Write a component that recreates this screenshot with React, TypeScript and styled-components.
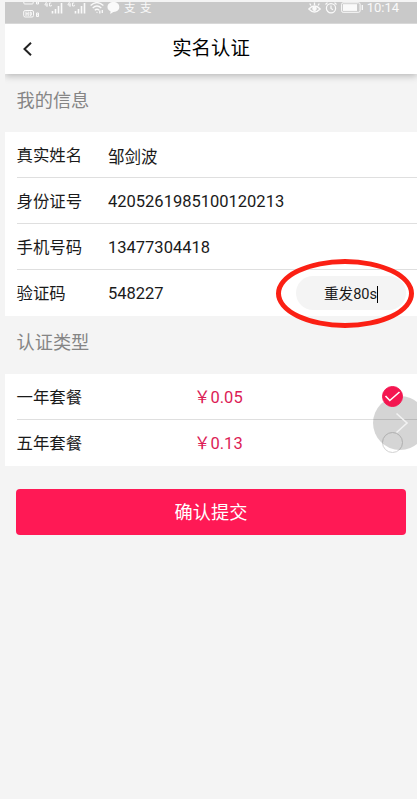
import React from "react";
import styled, { createGlobalStyle } from "styled-components";

const GlobalStyle = createGlobalStyle`
  * { box-sizing: border-box; }
  html, body { margin: 0; height: 100%; background: #f4f4f4; overflow: hidden; }
  body { font-family: Roboto, "Noto Sans CJK SC", sans-serif; color: #1a1a1a; }
`;

const Screen = styled.main`
  position: relative;
  width: 417px;
  height: 799px;
  padding: 2px 0 0 5px;
  overflow: hidden;
  background: #f4f4f4;
`;

const StatusBar = styled.div`
  display: flex;
  align-items: flex-start;
  justify-content: space-between;
  height: 22px;
  padding: 0 18px 0 18px;
  background: #c9c9c9;
  border-bottom: 1px solid #d8d8d8;
  color: #fafafa;
  svg { display: block; flex: none; }
`;

const StatusGroup = styled.div<{ $gap: number }>`
  display: flex;
  gap: ${(p) => p.$gap}px;
`;

const Clock = styled.span`
  font-size: 13px;
  line-height: 16px;
  margin: -2px 0 0 -1px;
`;

const PayGlyph = styled.span`
  font-size: 11.5px;
  line-height: 18px;
  width: 12px;
  margin: -3px 0 0 1px;
`;

const Header = styled.header`
  display: grid;
  grid-template-columns: 46px 1fr 46px;
  align-items: center;
  height: 50px;
  background: #fff;
  box-shadow: 0 2px 7px rgba(0, 0, 0, 0.25);
  clip-path: inset(0 0 -12px 0);
`;

const BackButton = styled.button`
  display: flex;
  justify-content: center;
  padding: 0;
  border: 0;
  background: none;
`;

const Title = styled.h1`
  margin: 0;
  font-size: 19.4px;
  line-height: 28px;
  font-weight: 400;
  text-align: center;
  color: #000;
`;

const SectionTitle = styled.h2`
  height: 58px;
  margin: 0;
  padding: 13px 0 0 11.5px;
  font-size: 18.2px;
  line-height: 27px;
  font-weight: 400;
  color: #858585;
`;

const List = styled.section`
  padding-left: 11.5px;
  background: #fff;
`;

const Row = styled.div<{ $columns: string }>`
  display: grid;
  grid-template-columns: ${(p) => p.$columns};
  align-items: center;
  height: 46px;
  border-bottom: 1px solid #dfdfdf;
  font-size: 16.4px;
  line-height: 24px;
  &:last-child { border-bottom-color: transparent; }
`;

const Label = styled.span`
  padding-top: 3px;
`;

const Value = styled.span<{ $drop?: number }>`
  font-size: 16.5px;
  padding-top: ${(p) => p.$drop ?? 3}px;
`;

const Price = styled.span`
  padding-top: 3px;
  font-size: 16.5px;
  color: #dc1c56;
`;

const ResendButton = styled.button`
  position: relative;
  display: flex;
  align-items: center;
  justify-content: center;
  width: 110px;
  height: 34px;
  padding: 3px 0 0;
  border: 0;
  border-radius: 17px;
  background: #f4f4f4;
  font: inherit;
  font-size: 14.6px;
  color: #1a1a1a;
`;

const Caret = styled.i`
  width: 1px;
  height: 17px;
  background: #000;
`;

const Highlight = styled.span`
  position: absolute;
  left: -20px;
  top: -17px;
  width: 138px;
  height: 69px;
  border: 5px solid #fb2014;
  border-radius: 50%;
  pointer-events: none;
`;

const Radio = styled.span<{ $checked: boolean }>`
  position: relative;
  z-index: ${(p) => (p.$checked ? 3 : 1)};
  display: flex;
  align-items: center;
  justify-content: center;
  width: 21px;
  height: 21px;
  border: 1px solid ${(p) => (p.$checked ? "#f41650" : "#d2d2d2")};
  border-radius: 50%;
  background: ${(p) => (p.$checked ? "#f41650" : "transparent")};
`;

const FloatingHandle = styled.button`
  position: absolute;
  z-index: 2;
  left: 373px;
  top: 396px;
  width: 54px;
  height: 54px;
  padding: 0 0 1px;
  border: 0;
  border-radius: 50%;
  background: rgba(0, 0, 0, 0.165);
  svg { display: block; margin-left: 22px; }
`;

const Submit = styled.button`
  display: block;
  width: 390px;
  height: 46px;
  margin: 23px 0 0 11px;
  padding: 0 0 3px;
  border: 0;
  border-radius: 4px;
  background: #ff1955;
  color: #fff;
  font: inherit;
  font-size: 18.2px;
`;

const HdBadge = () => (
  <svg width="18" height="18" viewBox="0 0 18 18" fill="none" stroke="currentColor">
    <path d="M.8 0v1q0 1 1 1h7.4q1 0 1-1V0M13.5 0h2v2h-2z" />
    <rect x=".7" y="8.5" width="9.8" height="6.5" rx="1.5" />
    <path d="M3 9.5v4.5M5.2 9.5v4.5M3 11.8h2.2M7.2 10v3.5h.8q1.2-1.7 0-3.5zM13.5 11h2v3.5h-2zM13.5 12.8h2" />
  </svg>
);

const Signal = () => (
  <svg width="20" height="14" viewBox="0 0 20 14" fill="none" stroke="currentColor">
    <path d="M2.5 0 .8 3h3M3 1v4M7.2 1H5.5v3h1.8V2.8" strokeWidth=".9" />
    <path d="M8.5 11.5V9M11.5 11.5V7M14.5 11.5V4M17.5 11.5V1" strokeWidth="1.6" />
  </svg>
);

const Wifi = () => (
  <svg width="14" height="13" viewBox="0 0 14 13" fill="none" stroke="currentColor" strokeWidth="1.3">
    <path d="M.6 3.5q6.2-5.8 12.8 0M2.7 6q4.2-4 8.6 0M4.8 8.3q2.2-2 4.4 0" />
    <path d="M6.5 10.3h1M9.8 8.5v3M12.3 8v3" />
  </svg>
);

const Bubble = () => (
  <svg width="13" height="13" viewBox="0 0 13 13" fill="currentColor">
    <path d="M6.5 0C3 0 .5 2 .5 5c0 2 1 3.5 3 4.3L3.3 12l3-2.1C10 10 12.3 8 12.3 5c0-3-2.3-5-5.8-5Z" />
  </svg>
);

const Eye = () => (
  <svg width="13" height="12" viewBox="0 0 13 12" fill="none" stroke="currentColor" strokeWidth="1.3">
    <path d="M.8 7q5.7-6 11.4 0-5.7 6-11.4 0ZM6.5 3V.5M3 3.5 1.7 1.5M10 3.5l1.3-2" />
    <circle cx="6.5" cy="6.8" r="1.6" fill="currentColor" />
  </svg>
);

const Alarm = () => (
  <svg width="12" height="12" viewBox="0 0 12 12" fill="none" stroke="currentColor" strokeWidth="1.2">
    <circle cx="6" cy="6.2" r="4.6" />
    <path d="M6 3.5v3l2 1.2M.5 2.5 2.5.6M11.5 2.5 9.5.6" />
  </svg>
);

const Battery = () => (
  <svg width="23" height="12" viewBox="0 0 23 12">
    <rect x=".6" y=".8" width="18.5" height="9.5" rx="1.5" fill="none" stroke="currentColor" />
    <rect x="2" y="2.2" width="14" height="6.7" fill="currentColor" />
    <path d="M21.3 3v5" stroke="currentColor" strokeWidth="1.3" />
  </svg>
);

const profile = [
  { label: "真实姓名", value: "邹剑波", drop: 6 },
  { label: "身份证号", value: "4205261985100120213" },
  { label: "手机号码", value: "13477304418" },
];

const plans = [
  { label: "一年套餐", price: "0.05", checked: true },
  { label: "五年套餐", price: "0.13", checked: false },
];

export default function App() {
  return (
    <>
      <GlobalStyle />
      <Screen>
        <StatusBar>
          <StatusGroup $gap={3}>
            <HdBadge />
            <Signal />
            <Signal />
            <Wifi />
            <Bubble />
            <PayGlyph>支</PayGlyph>
            <PayGlyph>支</PayGlyph>
          </StatusGroup>
          <StatusGroup $gap={4}>
            <Eye />
            <Alarm />
            <Battery />
            <Clock>10:14</Clock>
          </StatusGroup>
        </StatusBar>
        <Header>
          <BackButton aria-label="返回">
            <svg width="12" height="16" viewBox="0 0 12 16" fill="none" stroke="#222" strokeWidth="2">
              <path d="M9 1.8 2.5 8 9 14.2" />
            </svg>
          </BackButton>
          <Title>实名认证</Title>
        </Header>
        <SectionTitle>我的信息</SectionTitle>
        <List>
          {profile.map((item) => (
            <Row key={item.label} $columns="91.5px 1fr">
              <Label>{item.label}</Label>
              <Value $drop={item.drop}>{item.value}</Value>
            </Row>
          ))}
          <Row $columns="91.5px 1fr 121px">
            <Label>验证码</Label>
            <Value>548227</Value>
            <ResendButton>
              重发80s
              <Caret />
              <Highlight />
            </ResendButton>
          </Row>
        </List>
        <SectionTitle>认证类型</SectionTitle>
        <List>
          {plans.map((plan) => (
            <Row key={plan.label} $columns="177.5px 1fr 35px">
              <Label>{plan.label}</Label>
              <Price>{"\uFFE5"}{plan.price}</Price>
              <Radio $checked={plan.checked}>
                {plan.checked && (
                  <svg width="17" height="13" viewBox="0 0 17 13" fill="none" stroke="#fff" strokeWidth="1.6">
                    <path d="m1.5 6 4.3 4.5L15.5 2" />
                  </svg>
                )}
              </Radio>
            </Row>
          ))}
        </List>
        <Submit>确认提交</Submit>
        <FloatingHandle aria-label="展开">
          <svg width="14" height="22" viewBox="0 0 14 22" fill="none" stroke="#f2f2f2" strokeWidth="1.6">
            <path d="m1.5 1.5 10.5 9.5L1.5 20.5" />
          </svg>
        </FloatingHandle>
      </Screen>
    </>
  );
}
